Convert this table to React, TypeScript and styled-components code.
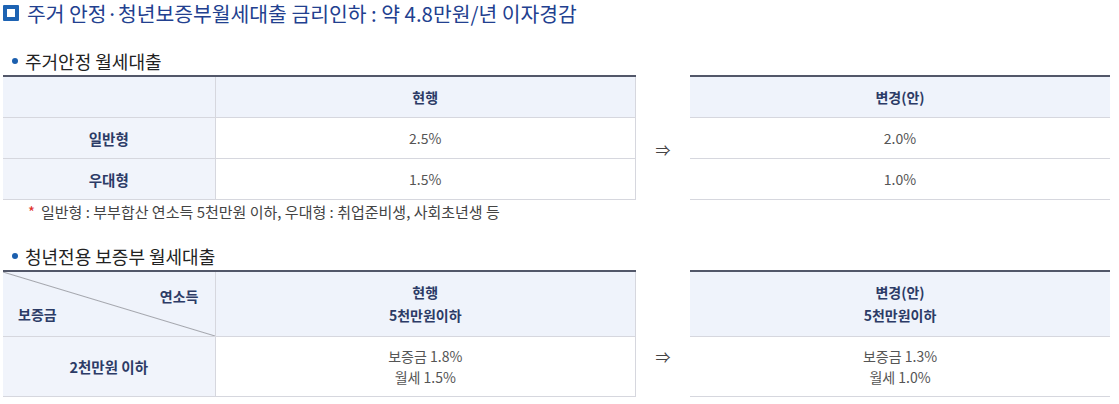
import styled, { createGlobalStyle } from "styled-components";

const GlobalStyle = createGlobalStyle`
  html, body {
    margin: 0;
    padding: 0;
    background: #fff;
  }
  body {
    font-family: "Noto Sans CJK KR", "Noto Sans", sans-serif;
    color: #333;
  }
`;

const Page = styled.div`
  width: 1119px;
  padding-left: 3px;
  box-sizing: border-box;
`;

const Title = styled.h2`
  display: flex;
  align-items: center;
  gap: 8px;
  margin: 0;
  height: 26px;
  font-size: 20.4px;
  font-weight: 400;
  color: #22408f;
`;

const TitleIcon = styled.span`
  width: 16px;
  height: 16px;
  box-sizing: border-box;
  border: 4px solid #1d63b3;
  background: #fff;
  border-radius: 1px;
  flex: none;
`;

const SubHeading = styled.h3<{ $top: number }>`
  display: flex;
  align-items: center;
  gap: 7px;
  margin: ${(p) => p.$top}px 0 0 9px;
  height: 24px;
  font-size: 18px;
  font-weight: 400;
  color: #222;

  &::before {
    content: "";
    width: 6px;
    height: 6px;
    border-radius: 50%;
    background: #1b5fae;
  }
`;

const Compare = styled.div`
  display: flex;
  margin-top: 2px;
`;

const Table = styled.table<{ $width: number; $edge?: boolean }>`
  width: ${(p) => p.$width}px;
  border-collapse: collapse;
  table-layout: fixed;
  border-top: 2px solid #525769;
  border-right: ${(p) => (p.$edge ? "1px solid #d6d7de" : "none")};
  font-size: 14px;
`;

const HeadCell = styled.th<{ $h: number }>`
  height: ${(p) => p.$h}px;
  padding: 0;
  background: #eff3fb;
  color: #2c3b66;
  font-weight: 700;
  line-height: 23px;
  text-align: center;
  border-bottom: 1px solid #d6d7de;
  & + & {
    border-left: 1px solid #d6d7de;
  }
`;

const RowHead = styled.th<{ $h: number }>`
  height: ${(p) => p.$h}px;
  padding: 0;
  background: #f1f4fb;
  color: #2c3b66;
  font-size: 14.5px;
  font-weight: 700;
  text-align: center;
  border-bottom: 1px solid #d6d7de;
  border-right: 1px solid #d6d7de;
`;

const Cell = styled.td<{ $h: number }>`
  height: ${(p) => p.$h}px;
  padding: 0;
  color: #555;
  text-align: center;
  line-height: 21px;
  border-bottom: 1px solid #d6d7de;
`;

const DiagonalHead = styled.th`
  height: 64px;
  padding: 0 16px 0 15px;
  background-color: #eff3fb;
  background-image: linear-gradient(
    to top right,
    transparent calc(50% - 1px),
    #a4a6ad 50%,
    transparent calc(50% + 1px)
  );
  color: #2c3b66;
  font-weight: 700;
  line-height: 18px;
  border-bottom: 1px solid #d6d7de;
  border-right: 1px solid #d6d7de;
  vertical-align: top;
`;

const DiagTop = styled.div`
  text-align: right;
  margin-top: 15px;
`;

const DiagBottom = styled.div`
  text-align: left;
`;

const ArrowCol = styled.div<{ $head: number }>`
  width: 54px;
  flex: none;
  display: flex;
  align-items: center;
  justify-content: center;
  padding: ${(p) => p.$head}px 0 20px;
  box-sizing: border-box;
  font-size: 15px;
  color: #444;
`;

const Note = styled.p`
  margin: 2px 0 0 25px;
  line-height: 20px;
  font-size: 15px;
  color: #444;

  & > b {
    color: #e0302a;
    font-weight: 400;
    margin-right: 6px;
  }
`;

export default function App() {
  return (
    <Page>
      <GlobalStyle />
      <Title>
        <TitleIcon />
        주거 안정·청년보증부월세대출 금리인하 : 약 4.8만원/년 이자경감
      </Title>

      <SubHeading $top={23}>주거안정 월세대출</SubHeading>
      <Compare>
        <Table $width={633} $edge>
          <colgroup>
            <col style={{ width: 212 }} />
            <col />
          </colgroup>
          <thead>
            <tr>
              <HeadCell $h={40} />
              <HeadCell $h={40}>현행</HeadCell>
            </tr>
          </thead>
          <tbody>
            <tr>
              <RowHead $h={40}>일반형</RowHead>
              <Cell $h={40}>2.5%</Cell>
            </tr>
            <tr>
              <RowHead $h={40}>우대형</RowHead>
              <Cell $h={40}>1.5%</Cell>
            </tr>
          </tbody>
        </Table>
        <ArrowCol $head={43}>⇒</ArrowCol>
        <Table $width={420}>
          <thead>
            <tr>
              <HeadCell $h={40}>변경(안)</HeadCell>
            </tr>
          </thead>
          <tbody>
            <tr>
              <Cell $h={40}>2.0%</Cell>
            </tr>
            <tr>
              <Cell $h={40}>1.0%</Cell>
            </tr>
          </tbody>
        </Table>
      </Compare>
      <Note>
        <b>*</b>일반형 : 부부합산 연소득 5천만원 이하, 우대형 : 취업준비생, 사회초년생 등
      </Note>

      <SubHeading $top={22}>청년전용 보증부 월세대출</SubHeading>
      <Compare>
        <Table $width={633} $edge>
          <colgroup>
            <col style={{ width: 212 }} />
            <col />
          </colgroup>
          <thead>
            <tr>
              <DiagonalHead>
                <DiagTop>연소득</DiagTop>
                <DiagBottom>보증금</DiagBottom>
              </DiagonalHead>
              <HeadCell $h={64}>
                현행
                <br />
                5천만원이하
              </HeadCell>
            </tr>
          </thead>
          <tbody>
            <tr>
              <RowHead $h={59}>2천만원 이하</RowHead>
              <Cell $h={59}>
                보증금 1.8%
                <br />
                월세 1.5%
              </Cell>
            </tr>
          </tbody>
        </Table>
        <ArrowCol $head={66}>⇒</ArrowCol>
        <Table $width={420}>
          <thead>
            <tr>
              <HeadCell $h={64}>
                변경(안)
                <br />
                5천만원이하
              </HeadCell>
            </tr>
          </thead>
          <tbody>
            <tr>
              <Cell $h={59}>
                보증금 1.3%
                <br />
                월세 1.0%
              </Cell>
            </tr>
          </tbody>
        </Table>
      </Compare>
    </Page>
  );
}
